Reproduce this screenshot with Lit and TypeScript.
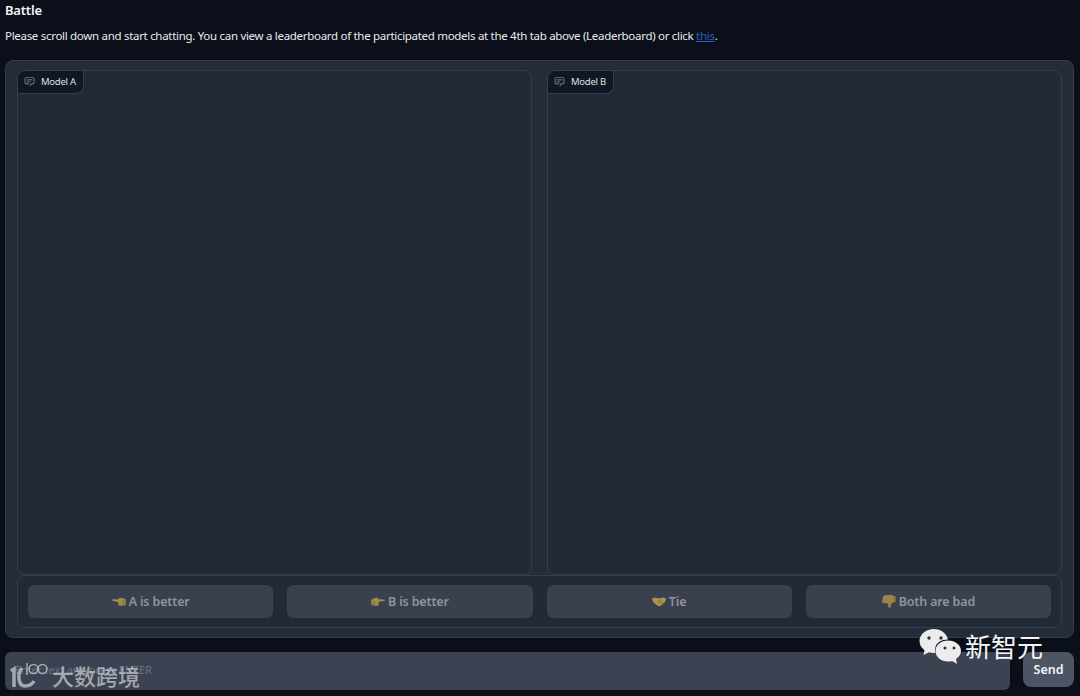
import { LitElement, html, css, svg } from "lit";
import { customElement } from "lit/decorators.js";

const chatIcon = html`<svg class="chat-icon" viewBox="0 0 32 32" width="11" height="11"><path fill="currentColor" d="M17.74 30L16 29l4-7h6a2 2 0 0 0 2-2V8a2 2 0 0 0-2-2H6a2 2 0 0 0-2 2v12a2 2 0 0 0 2 2h9v2H6a4 4 0 0 1-4-4V8a4 4 0 0 1 4-4h20a4 4 0 0 1 4 4v12a4 4 0 0 1-4 4h-4.84Z"/><path fill="currentColor" d="M8 10h16v2H8zm0 6h10v2H8z"/></svg>`;

const left = svg`<path fill="#a08a4c" d="M0 2.600 C2 2 4 2.200 6 2.600 L7 1 C9 .4 12 1 14 3 L14 8 C11 9 8 9 6.600 8.400 L6 5 L1 3.900 C.2 3.700 0 3.100 0 2.600Z"/><path fill="#7d6c3f" d="M10 3h4v5h-4z" opacity=".5"/>`;
const right = svg`<path fill="#a08a4c" d="M14 2.800 C12 2 10 2 8 2.400 L7 1 C5 .4 2 1.200 0 3.400 L0 7.500 C3 9 6 9 7.400 8.400 L8 4.800 L13 4 C13.800 3.800 14 3.300 14 2.800Z"/><path fill="#7d6c3f" d="M0 4h4v4H0z" opacity=".5"/>`;
const shake = svg`<path fill="#ad9350" d="M0 1.500 L3 .5 L7 1.400 L11 .5 L14 1.500 L13 5 L8.500 9 L6 9 L1 5Z"/><path fill="#8a7540" d="M5 4 L8 2.500 L11 5 L8 7Z" opacity=".6"/>`;
const down = svg`<path fill="#9a8448" d="M3 .5 C3 .2 3.500 0 4 0 L10 0 L12 1 L12 7 L9.500 8.500 L8.500 12 C8 13 6.500 13 6.300 11.500 L6 8.500 L1.500 8 C.5 8 0 7.400 .2 6.500 L1 2 C1.200 1 2 .5 3 .5Z"/><path fill="#7d6c3f" d="M12 1h2v6h-2z"/>`;

@customElement("app-root")
export class AppRoot extends LitElement {
  static styles = css`
    :host {
      display: block;
      position: relative;
      height: 696px;
      overflow: hidden;
      background: #0b0f19;
      color: #e5e7eb;
      font-family: "Noto Sans", "Noto Sans CJK SC", sans-serif;
      font-size: 12px;
    }
    .head { padding: 0 5px; height: 60px; display: flex; flex-direction: column; }
    .title { font-size: 13px; font-weight: 600; letter-spacing: -.2px; color: #f3f4f6; line-height: 20px; }
    .intro { margin-top: 6px; line-height: 20px; font-size: 11.500px; letter-spacing: -.3px; color: #e8eaee; }
    .intro a { color: #2f5fc4; text-decoration: underline; }
    .panel {
      margin: 0 6px 0 5px;
      height: 578px;
      box-sizing: border-box;
      background: #252c39;
      border: 1px solid #343b49;
      border-radius: 8px;
      padding: 9px 11px;
      display: flex;
      flex-direction: column;
    }
    .chats { display: flex; gap: 15px; height: 505px; flex: none; }
    .chat {
      flex: 1;
      background: #232a37;
      border: 1px solid #363d4b;
      border-radius: 8px;
      display: flex;
      align-items: flex-start;
    }
    .label {
      display: flex;
      align-items: center;
      gap: 6px;
      height: 20px;
      padding: 0 7px 2px 6px;
      background: #111723;
      border-right: 1px solid #363d4b;
      border-bottom: 1px solid #363d4b;
      border-radius: 8px 0 8px 0;
      font-size: 9.500px;
      letter-spacing: -.25px;
      color: #dde0e5;
    }
    .chat-icon { color: #9ca3af; }
    .votes {
      height: 53px;
      box-sizing: border-box;
      display: flex;
      gap: 14px;
      padding: 9px 10px;
      background: #232a37;
      border: 1px solid #363d4b;
      border-radius: 8px;
    }
    .vote {
      flex: 1;
      height: 33px;
      display: flex;
      align-items: center;
      justify-content: center;
      gap: 3px;
      background: #3a404d;
      border-radius: 6px;
      color: #8f949e;
      font-size: 12.500px;
      letter-spacing: -.15px;
      font-weight: 600;
    }
    .vote svg { flex: none; }
    .send-row { display: flex; gap: 13px; margin: 14px 6px 0 5px; align-items: flex-start; }
    .input {
      flex: 1;
      height: 38px;
      box-sizing: border-box;
      display: flex;
      align-items: center;
      padding: 0 10px 3px;
      background: #3b4251;
      border-radius: 6px;
      font-size: 11px;
      letter-spacing: -.12px;
      color: #6b7280;
    }
    .send {
      width: 51px;
      height: 35px;
      display: flex;
      align-items: center;
      justify-content: center;
      background: #4b5563;
      border-radius: 8px;
      color: #f3f4f6;
      font-size: 12.500px;
      font-weight: 600;
    }
    .mark-wechat {
      position: absolute;
      left: 919px;
      top: 626px;
      display: flex;
      align-items: center;
      gap: 4px;
      color: #f5f5f5;
      font-size: 26px;
      font-family: "Noto Sans CJK SC", sans-serif;
      line-height: 40px;
    }
    .mark-100 {
      position: absolute;
      left: 9px;
      top: 660px;
      display: flex;
      align-items: flex-start;
      gap: 3px;
      color: rgba(205, 208, 212, .72);
      font-size: 22px;
      font-weight: 500;
      font-family: "Noto Sans CJK SC", sans-serif;
      line-height: 30px;
    }
  `;

  private vote(icon: unknown, w: number, h: number, text: string) {
    return html`<div class="vote"><svg width=${w} height=${h} viewBox="0 0 ${w} ${h}">${icon}</svg>${text}</div>`;
  }

  render() {
    return html`
      <div class="head">
        <div class="title">Battle</div>
        <div class="intro">Please scroll down and start chatting. You can view a leaderboard of the participated models at the 4th tab above (Leaderboard) or click <a>this</a>.</div>
      </div>
      <div class="panel">
        <div class="chats">
          <div class="chat"><div class="label">${chatIcon}Model A</div></div>
          <div class="chat"><div class="label">${chatIcon}Model B</div></div>
        </div>
        <div class="votes">
          ${this.vote(left, 14, 9, "A is better")}
          ${this.vote(right, 14, 9, "B is better")}
          ${this.vote(shake, 14, 9, "Tie")}
          ${this.vote(down, 14, 13, "Both are bad")}
        </div>
      </div>
      <div class="send-row">
        <div class="input">Enter text and press ENTER</div>
        <div class="send">Send</div>
      </div>
      <div class="mark-wechat">
        <svg width="42" height="38" viewBox="0 0 42 38">
          <path fill="#ececec" d="M15 2C7 2 .5 7.500 .5 14c0 3.800 2 7 5 9.200L4.500 28l5.500-2.800c1.500.4 3.200.7 5 .7l1.500-.1C16 24 16 22.500 16.300 21c1-5.500 6-8.500 12.700-8.500C27.500 6.500 22 2 15 2Z"/>
          <path fill="#ececec" d="M42 24c0-6-5.800-10.500-13-10.500S16.500 18 16.500 24 22 34.500 29 34.500c1.500 0 2.800-.2 4-.6L38 37l-1-5c3-2 5-4.800 5-8Z"/>
          <circle cx="10" cy="11" r="1.700" fill="#333"/><circle cx="22" cy="11" r="1.700" fill="#333"/>
          <circle cx="26" cy="21" r="1.500" fill="#333"/><circle cx="35" cy="21" r="1.500" fill="#333"/>
        </svg>
        <span>新智元</span>
      </div>
      <div class="mark-100">
        <svg width="40" height="30" viewBox="0 0 40 30" fill="none" stroke="currentColor">
          <path stroke-width="3.500" d="M2 11 L5 9 V27"/>
          <path stroke-width="3.500" d="M13 8 C8 14 9 26 16 26 C20 26 23 25 25 21"/>
          <path stroke-width="1.500" d="M18 3 V15"/>
          <circle cx="24.500" cy="9" r="4.500" stroke-width="1.500"/><circle cx="33.500" cy="9" r="4.500" stroke-width="1.500"/>
        </svg>
        <span>大数跨境</span>
      </div>
    `;
  }
}
